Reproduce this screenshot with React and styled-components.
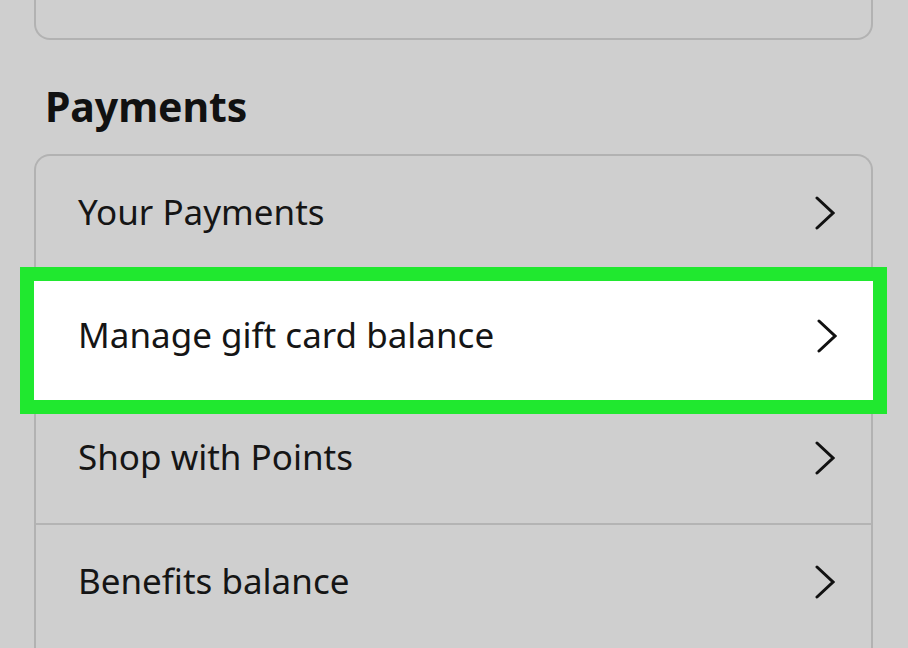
import React from "react";
import styled, { createGlobalStyle } from "styled-components";

const Global = createGlobalStyle`
  html, body { margin: 0; padding: 0; background: #cfcfcf; }
  body { font-family: "Noto Sans", "Open Sans", Arial, sans-serif; color: #111; }
`;

const Page = styled.div`
  width: 908px;
  height: 648px;
  overflow: hidden;
  background: #cfcfcf;
  padding: 0 35px 0 34px;
  box-sizing: border-box;
`;

const TopCard = styled.div`
  height: 40px;
  border: 2px solid #b2b2b2;
  border-top: none;
  border-radius: 0 0 16px 16px;
  box-sizing: border-box;
`;

const Heading = styled.h2`
  margin: 39px 0 0 11px;
  font-size: 41px;
  line-height: 54px;
  font-weight: 700;
  color: #111;
  letter-spacing: -0.1px;
`;

const Card = styled.div`
  margin-top: 21px;
  border: 2px solid #b2b2b2;
  border-bottom: none;
  border-radius: 16px 16px 0 0;
`;

const Row = styled.div`
  position: relative;
  height: ${(p) => (p.$active ? "119px" : "123px")};
  margin: ${(p) => (p.$active ? "2px -2px" : "0")};
  padding: 0 36px 9px ${(p) => (p.$active ? "44px" : "42px")};
  display: flex;
  align-items: center;
  justify-content: space-between;
  background: ${(p) => (p.$active ? "#ffffff" : "transparent")};
  outline: ${(p) => (p.$active ? "14px solid #20e82f" : "none")};
  border-bottom: ${(p) => (p.$line ? "2px solid #b4b4b4" : "none")};
  box-sizing: border-box;
`;

const Label = styled.span`
  font-size: 35px;
  line-height: 1;
  color: #151515;
  padding-bottom: 4px;
`;

const Chevron = () => (
  <svg width="22" height="36" viewBox="0 0 22 36" fill="none">
    <path d="M4 3 L20 18 L4 33" stroke="#111" strokeWidth="3" strokeLinecap="round" strokeLinejoin="miter" />
  </svg>
);

const items = [
  { label: "Your Payments" },
  { label: "Manage gift card balance", active: true },
  { label: "Shop with Points", line: true },
  { label: "Benefits balance" },
];

export default function App() {
  return (
    <Page>
      <Global />
      <TopCard />
      <Heading>Payments</Heading>
      <Card>
        {items.map((it) => (
          <Row key={it.label} $active={it.active} $line={it.line}>
            <Label>{it.label}</Label>
            <Chevron />
          </Row>
        ))}
      </Card>
    </Page>
  );
}
